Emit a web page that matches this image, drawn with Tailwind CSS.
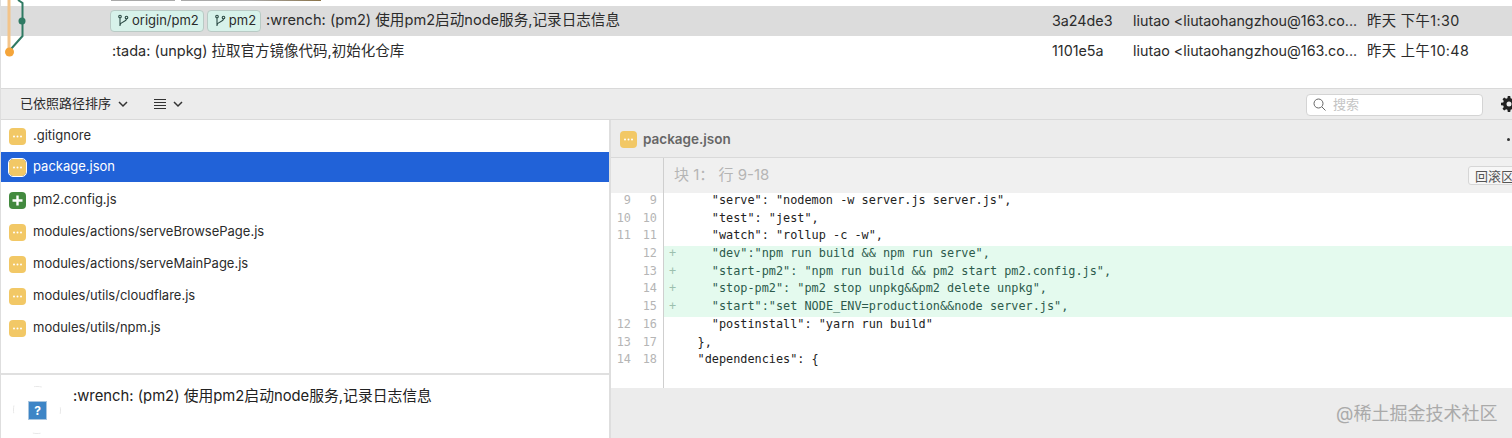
<!DOCTYPE html>
<html lang="zh">
  <head>
    <meta charset="UTF-8" />
    <title>package.json</title>
    <script src="https://cdn.jsdelivr.net/npm/@tailwindcss/browser@4"></script>
  </head>
  <body class="w-[1512px] h-[438px] overflow-hidden bg-white text-[#2b2b2b] font-['Inter','Noto_Sans_CJK_SC',sans-serif] text-[13px]">
    <div class="relative flex flex-col h-[438px] border-l border-[#dedede]">
      <!-- commit graph -->
      <svg class="absolute -left-px top-0 z-10" width="40" height="64" viewBox="0 0 40 64" fill="none">
        <path d="M9 0V50" stroke="#f3c48a" stroke-width="3" />
        <path d="M18 0L22.500 3V36L11 49" stroke="#2f7a63" stroke-width="2" />
        <circle cx="22" cy="21" r="3.500" fill="#2f7a63" />
        <circle cx="9.500" cy="52" r="4.500" fill="#f5a53a" />
      </svg>

      <!-- commit list -->
      <section class="h-[88px] shrink-0">
        <!-- bottom edge of the chips from the row above -->
        <div class="flex gap-[6px] h-[6px] pl-[110px]">
          <span class="w-[64px] h-px bg-[#a9a9a9]"></span>
          <span class="w-[140px] h-px bg-gradient-to-r from-[#a9a9a9] via-[#a9a9a9] to-[#8a7348]"></span>
        </div>
        <div class="flex items-center h-[30px] bg-[#dcdcdc]">
          <div class="flex items-center gap-[3px] w-[1051px] pl-[109px] shrink-0">
            <span class="flex items-center gap-[3px] h-[22px] pl-[6px] pr-[4px] rounded-[4px] bg-[#d7f2ea] border border-[#b9cac5]">
              <svg width="12" height="14" viewBox="0 0 12 14" fill="none" stroke="#2b4a44" stroke-width="1.100"><circle cx="3" cy="2.500" r="1.300" /><circle cx="9.500" cy="3.500" r="1.300" /><path d="M3 4V12M9.500 5C9.500 8 3.500 7.500 3 11" /></svg>
              origin/pm2
            </span>
            <span class="flex items-center gap-[3px] h-[22px] pl-[6px] pr-[4px] rounded-[4px] bg-[#d7f2ea] border border-[#b9cac5]">
              <svg width="12" height="14" viewBox="0 0 12 14" fill="none" stroke="#2b4a44" stroke-width="1.100"><circle cx="3" cy="2.500" r="1.300" /><circle cx="9.500" cy="3.500" r="1.300" /><path d="M3 4V12M9.500 5C9.500 8 3.500 7.500 3 11" /></svg>
              pm2
            </span>
            <span class="ml-[2px] text-[14.600px]">:wrench: (pm2) 使用pm2启动node服务,记录日志信息</span>
          </div>
          <span class="w-[81px] shrink-0 text-[14.300px]">3a24de3</span>
          <span class="w-[234px] shrink-0 text-[14.300px]">liutao &lt;liutaohangzhou@163.co...</span>
          <span class="text-[14.300px] tracking-[0.4px]">昨天 下午1:30</span>
        </div>
        <div class="flex items-center h-[30px]">
          <div class="w-[1051px] pl-[111px] shrink-0 text-[14.500px]">:tada: (unpkg) 拉取官方镜像代码,初始化仓库</div>
          <span class="w-[81px] shrink-0 text-[14.300px]">1101e5a</span>
          <span class="w-[234px] shrink-0 text-[14.300px]">liutao &lt;liutaohangzhou@163.co...</span>
          <span class="text-[14.300px] tracking-[0.4px]">昨天 上午10:48</span>
        </div>
      </section>

      <!-- toolbar -->
      <section class="flex items-center h-[32px] shrink-0 bg-[#ececec] border-y border-[#d9d9d9] pl-[19px]">
        <span class="shrink-0 whitespace-nowrap">已依照路径排序</span>
        <svg class="ml-[7px] shrink-0" width="10" height="8" viewBox="0 0 10 8" fill="none" stroke="#333" stroke-width="1.500"><path d="M1 2l4 4 4-4" /></svg>
        <svg class="ml-[26px] shrink-0" width="12" height="12" viewBox="0 0 12 12" stroke="#333" stroke-width="1"><path d="M0 1.500H12M0 4.500H12M0 7.500H12M0 10.500H12" /></svg>
        <svg class="ml-[7px] shrink-0" width="10" height="8" viewBox="0 0 10 8" fill="none" stroke="#333" stroke-width="1.500"><path d="M1 2l4 4 4-4" /></svg>
        <div class="flex items-center gap-[7px] shrink-0 ml-[1123px] mt-[1px] w-[177px] h-[22px] pl-[6px] bg-white rounded-[4px] border border-[#d4d4d4] text-[#c4c4c4]">
          <svg width="13" height="13" viewBox="0 0 13 13" fill="none" stroke="#666" stroke-width="1"><circle cx="5.500" cy="5.500" r="4.500" /><path d="M9 9l3.500 3.500" /></svg>
          搜索
        </div>
        <svg class="ml-[18px] shrink-0" width="16" height="16" viewBox="0 0 16 16" fill="#222"><path d="M6.800 0h2.400l.4 2.200 1.300.6L12.800 1.500l1.700 1.700-1.300 1.900.6 1.300 2.200.4v2.400l-2.200.4-.6 1.300 1.300 1.900-1.700 1.700-1.900-1.300-1.300.6-.4 2.200H6.800l-.4-2.200-1.300-.6-1.900 1.300-1.700-1.700 1.300-1.900-.6-1.300L0 9.200V6.800l2.200-.4.6-1.300-1.300-1.900 1.700-1.700 1.900 1.300 1.300-.6zM8 5.500a2.500 2.500 0 1 0 0 5 2.500 2.500 0 0 0 0-5z" /></svg>
      </section>

      <main class="flex flex-1 min-h-0">
        <!-- file list + commit message -->
        <section class="flex flex-col w-[608px] shrink-0">
          <ul class="h-[253px] shrink-0">
            <li class="flex items-center gap-[7px] h-[32px] pl-[8px]">
              <svg width="17" height="17" viewBox="0 0 17 17"><rect width="17" height="17" rx="4" fill="#f2c866" /><circle cx="5" cy="8.500" r="1" fill="#fff" /><circle cx="8.500" cy="8.500" r="1" fill="#fff" /><circle cx="12" cy="8.500" r="1" fill="#fff" /></svg>.gitignore
            </li>
            <li class="flex items-center gap-[7px] h-[30px] mb-[2px] pl-[8px] bg-[#2162d8] text-white">
              <svg width="17" height="17" viewBox="0 0 17 17" class="outline outline-white rounded-[4px]"><rect width="17" height="17" rx="4" fill="#f2c866" /><circle cx="5" cy="8.500" r="1" fill="#fff" /><circle cx="8.500" cy="8.500" r="1" fill="#fff" /><circle cx="12" cy="8.500" r="1" fill="#fff" /></svg>package.json
            </li>
            <li class="flex items-center gap-[7px] h-[32px] pl-[8px]">
              <svg width="17" height="17" viewBox="0 0 17 17"><rect width="17" height="17" rx="4" fill="#438a3f" /><path d="M8.500 3.500V13.500M3.500 8.500H13.500" stroke="#fff" stroke-width="2.400" /></svg>pm2.config.js
            </li>
            <li class="flex items-center gap-[7px] h-[32px] pl-[8px]">
              <svg width="17" height="17" viewBox="0 0 17 17"><rect width="17" height="17" rx="4" fill="#f2c866" /><circle cx="5" cy="8.500" r="1" fill="#fff" /><circle cx="8.500" cy="8.500" r="1" fill="#fff" /><circle cx="12" cy="8.500" r="1" fill="#fff" /></svg>modules/actions/serveBrowsePage.js
            </li>
            <li class="flex items-center gap-[7px] h-[32px] pl-[8px]">
              <svg width="17" height="17" viewBox="0 0 17 17"><rect width="17" height="17" rx="4" fill="#f2c866" /><circle cx="5" cy="8.500" r="1" fill="#fff" /><circle cx="8.500" cy="8.500" r="1" fill="#fff" /><circle cx="12" cy="8.500" r="1" fill="#fff" /></svg>modules/actions/serveMainPage.js
            </li>
            <li class="flex items-center gap-[7px] h-[32px] pl-[8px]">
              <svg width="17" height="17" viewBox="0 0 17 17"><rect width="17" height="17" rx="4" fill="#f2c866" /><circle cx="5" cy="8.500" r="1" fill="#fff" /><circle cx="8.500" cy="8.500" r="1" fill="#fff" /><circle cx="12" cy="8.500" r="1" fill="#fff" /></svg>modules/utils/cloudflare.js
            </li>
            <li class="flex items-center gap-[7px] h-[32px] pl-[8px]">
              <svg width="17" height="17" viewBox="0 0 17 17"><rect width="17" height="17" rx="4" fill="#f2c866" /><circle cx="5" cy="8.500" r="1" fill="#fff" /><circle cx="8.500" cy="8.500" r="1" fill="#fff" /><circle cx="12" cy="8.500" r="1" fill="#fff" /></svg>modules/utils/npm.js
            </li>
          </ul>
          <div class="flex flex-1 gap-[12px] pl-[12px] border-t-2 border-[#e0e0e0]">
            <svg class="shrink-0 mt-[11px]" width="48" height="48" viewBox="0 0 48 48" fill="none">
              <circle cx="24" cy="24" r="23.500" stroke="#e8e8e8" stroke-dasharray="8 29" stroke-dashoffset="4" />
              <rect x="15.500" y="15.500" width="18" height="18" fill="#3d85c6" stroke="#a9c6e0" />
              <text x="24.500" y="29" fill="#fff" font-size="12" font-weight="700" text-anchor="middle">?</text>
            </svg>
            <p class="pt-[10px] text-[14.800px] text-[#222]">:wrench: (pm2) 使用pm2启动node服务,记录日志信息</p>
          </div>
        </section>

        <!-- diff -->
        <section class="flex flex-col flex-1 min-w-0 bg-[#ececec] border-l-2 border-[#dedede]">
          <div class="flex items-center gap-[6px] h-[38px] shrink-0 pt-[2px] pl-[9px] border-b border-[#d9d9d9]">
            <svg width="17" height="17" viewBox="0 0 17 17"><rect width="17" height="17" rx="4" fill="#f2c866" /><circle cx="5" cy="8.500" r="1" fill="#fff" /><circle cx="8.500" cy="8.500" r="1" fill="#fff" /><circle cx="12" cy="8.500" r="1" fill="#fff" /></svg>
            <span class="font-semibold text-[13.500px] text-[#666]">package.json</span>
            <span class="ml-auto mr-[2px] w-[3px] h-[3px] rounded-full bg-[#333]"></span>
          </div>
          <div class="flex items-center h-[35px] shrink-0 bg-[#f0f0f0]">
            <span class="w-[53px] h-full shrink-0 border-r border-[#cfcfcf]"></span>
            <span class="pl-[10px] text-[15px] text-[#b5b5b5]">块 1： 行 9-18</span>
            <span class="shrink-0 ml-auto -mr-[9px] px-[6px] h-[19px] leading-[18px] bg-[#f7f7f7] border border-[#d6d6d6] rounded-[3px] text-[#555] whitespace-nowrap">回滚区</span>
          </div>
          <div class="flex h-[195px] shrink-0 bg-white font-['DejaVu_Sans_Mono',monospace] text-[11.850px] leading-[14.500px]">
            <!-- line numbers, old and new -->
            <div class="w-[53px] shrink-0 border-r border-[#cfcfcf] text-[#b5b5b5]">
              <div class="grid grid-cols-[20px_26px] h-[17.700px] text-right"><span>9</span><span>9</span></div>
              <div class="grid grid-cols-[20px_26px] h-[17.700px] text-right"><span>10</span><span>10</span></div>
              <div class="grid grid-cols-[20px_26px] h-[17.700px] text-right"><span>11</span><span>11</span></div>
              <div class="grid grid-cols-[20px_26px] h-[17.700px] text-right"><span></span><span>12</span></div>
              <div class="grid grid-cols-[20px_26px] h-[17.700px] text-right"><span></span><span>13</span></div>
              <div class="grid grid-cols-[20px_26px] h-[17.700px] text-right"><span></span><span>14</span></div>
              <div class="grid grid-cols-[20px_26px] h-[17.700px] text-right"><span></span><span>15</span></div>
              <div class="grid grid-cols-[20px_26px] h-[17.700px] text-right"><span>12</span><span>16</span></div>
              <div class="grid grid-cols-[20px_26px] h-[17.700px] text-right"><span>13</span><span>17</span></div>
              <div class="grid grid-cols-[20px_26px] h-[17.700px] text-right"><span>14</span><span>18</span></div>
            </div>
            <!-- code -->
            <div class="flex-1 min-w-0 text-[#222]">
              <div class="h-[17.700px] pl-[5px] whitespace-pre">      "serve": "nodemon -w server.js server.js",</div>
              <div class="h-[17.700px] pl-[5px] whitespace-pre">      "test": "jest",</div>
              <div class="h-[17.700px] pl-[5px] whitespace-pre">      "watch": "rollup -c -w",</div>
              <div class="h-[17.700px] pl-[5px] whitespace-pre bg-[#e4faee] text-[#2c5a4c]"><span class="text-[#9cc0ae]">+</span>     "dev":"npm run build &amp;&amp; npm run serve",</div>
              <div class="h-[17.700px] pl-[5px] whitespace-pre bg-[#e4faee] text-[#2c5a4c]"><span class="text-[#9cc0ae]">+</span>     "start-pm2": "npm run build &amp;&amp; pm2 start pm2.config.js",</div>
              <div class="h-[17.700px] pl-[5px] whitespace-pre bg-[#e4faee] text-[#2c5a4c]"><span class="text-[#9cc0ae]">+</span>     "stop-pm2": "pm2 stop unpkg&amp;&amp;pm2 delete unpkg",</div>
              <div class="h-[17.700px] pl-[5px] whitespace-pre bg-[#e4faee] text-[#2c5a4c]"><span class="text-[#9cc0ae]">+</span>     "start":"set NODE_ENV=production&amp;&amp;node server.js",</div>
              <div class="h-[17.700px] pl-[5px] whitespace-pre">      "postinstall": "yarn run build"</div>
              <div class="h-[17.700px] pl-[5px] whitespace-pre">    },</div>
              <div class="h-[17.700px] pl-[5px] whitespace-pre">    "dependencies": {</div>
            </div>
          </div>
        </section>
      </main>

      <span class="absolute left-[1335px] top-[400px] text-[18px] text-[#aaaaaa]">@稀土掘金技术社区</span>
    </div>
  </body>
</html>
